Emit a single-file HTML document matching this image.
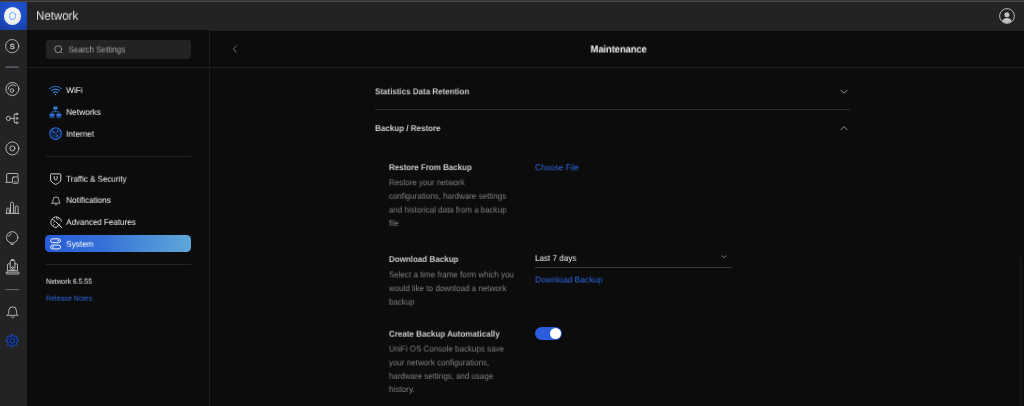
<!DOCTYPE html>
<html lang="en">
<head>
<meta charset="utf-8">
<title>Network</title>
<style>
*{box-sizing:border-box;margin:0;padding:0}
html,body{text-rendering:geometricPrecision;-webkit-font-smoothing:antialiased;width:1024px;height:406px;overflow:hidden;background:#0c0c0c;font-family:"Liberation Sans",sans-serif;color:#fff}
.abs{position:absolute}
#strip1{left:0;top:0;width:1024px;height:1px;background:#333334}
#strip2{left:0;top:1px;width:1024px;height:1px;background:#4b4b4d}
#hdr{left:0;top:2px;width:1024px;height:28.600px;background:#232325}
#logo{left:0;top:2px;width:27px;height:28px;background:radial-gradient(circle at 50% 30%,#2358d8 0%,#1c49bd 60%,#163c9f 100%)}
#logo i{position:absolute;left:3.900px;top:5.300px;width:17.100px;height:17.300px;border-radius:50%;background:radial-gradient(circle at 50% 40%,#ffffff 0%,#eeeeef 60%,#d4d4d8 100%)}
#logo b{position:absolute;left:8.800px;top:10.300px;width:7.300px;height:7.300px;border-radius:50%;border:0.900px solid #62a2f6}
#nav{left:0;top:30px;width:27px;height:376px;background:#232325}
#side{left:27px;top:30px;width:183px;height:376px;background:#0c0c0c;border-right:1px solid #1a1a1c}
#hline{left:27px;top:67px;width:997px;height:1px;background:#1f1f21}
#search{left:46px;top:40px;width:145px;height:19px;background:#232325;border-radius:3px}
.sdiv{position:absolute;left:46px;width:145px;height:1px;background:#242426}
#sys{left:45.400px;top:235.200px;width:146px;height:17.200px;border-radius:4.500px;background:linear-gradient(90deg,#295cd9 0%,#3471d8 40%,#4e93d8 75%,#5ea7d8 100%)}
.ico{position:absolute}
.tx{position:absolute;white-space:nowrap;line-height:1;transform-origin:0 50%;will-change:transform}
</style>
</head>
<body>
<div id="root" style="position:absolute;left:0;top:0;width:1024px;height:406px;overflow:hidden;will-change:transform">
<div class="abs" id="strip1"></div>
<div class="abs" id="strip2"></div>
<div class="abs" id="hdr"></div>
<div class="abs" id="logo"><i></i><b></b></div>
<svg class="abs" style="left:999px;top:7.900px" width="16" height="16" viewBox="0 0 16 16" fill="none"><circle cx="8" cy="8" r="7.400" stroke="#c6c6c8" stroke-width="0.900"/><circle cx="7.900" cy="6.700" r="2.500" fill="#c2c2c4"/><path d="M3.180 13.080A5 4.600 0 0 1 12.670 13.220A7 7 0 0 1 3.180 13.080z" fill="#c2c2c4"/></svg>

<div class="abs" id="nav"></div>
<div class="abs" id="side"></div>
<div class="abs" id="hline"></div>

<!-- left nav icons -->
<svg class="abs" style="left:0;top:30px" width="27" height="376" viewBox="0 0 27 376" fill="none" stroke="#c4c4c6" stroke-width="0.900" stroke-linecap="round" stroke-linejoin="round">
  <circle cx="12.200" cy="16.100" r="6.600" stroke-width="0.850"/>
  <text x="12.200" y="18.700" font-family="Liberation Sans, sans-serif" font-size="7.400" fill="#d0d0d2" stroke="#d0d0d2" stroke-width="0.300" text-anchor="middle">S</text>
  <path d="M5.900 37.100h12.600" stroke="#6c6c70" stroke-width="1.400"/>
  <!-- dashboard -->
  <circle cx="12.400" cy="59" r="6.500"/>
  <path d="M8.200 59.200a4.400 4.400 0 0 1 7.300-3.300"/>
  <circle cx="11.900" cy="60.600" r="1.800"/>
  <!-- topology -->
  <circle cx="8.400" cy="88.400" r="2.100"/>
  <path d="M10.600 88.400h3.600M15.600 84h-.5a.9.900 0 0 0-.9.900v7a.9.900 0 0 0 .9.900h.5"/>
  <circle cx="16.900" cy="84" r="0.900"/><circle cx="16.900" cy="88.400" r="0.900"/><circle cx="16.900" cy="92.800" r="0.900"/>
  <!-- devices -->
  <circle cx="12.400" cy="118.400" r="6.500"/><circle cx="12.400" cy="118.400" r="2.500"/>
  <!-- clients -->
  <path d="M6.700 151.800v-7.500a.8.800 0 0 1 .8-.8h9.700a.8.800 0 0 1 .8.800v2M5.700 152.300h6.200"/>
  <rect x="12.500" y="147" width="5.700" height="6.300" rx="1"/>
  <path d="M14.600 151.800h1.500" stroke-width="0.700"/>
  <!-- stats -->
  <path d="M6 183.400h13M6.700 183v-3.900a1 1 0 0 1 1-1h.6a1 1 0 0 1 1 1v3.900M10.500 183v-9.700a1 1 0 0 1 1-1h.9a1 1 0 0 1 1 1v9.700M15.200 183v-6a1 1 0 0 1 1-1h.9a1 1 0 0 1 1 1v6"/>
  <!-- insights -->
  <circle cx="12.200" cy="207.400" r="5.700"/>
  <path d="M8.800 206.300a3.700 3.700 0 0 1 2.300-2.400M10.900 214.300h2.700" />
  <!-- protect -->
  <rect x="6" y="242.100" width="13.200" height="1.900" rx="0.950"/>
  <path d="M10 233.800h-1.500a1 1 0 0 0-1 1v5.800h10v-5.800a1 1 0 0 0-1-1h-1.500"/>
  <rect x="10.200" y="230.500" width="4.700" height="9.300" rx="1.300"/>
  <path d="M11.300 230.500v-1h2.500v1" stroke-width="0.800"/>
  <circle cx="12.500" cy="237.600" r="0.900"/>
  <path d="M5.700 259.600h13.200" stroke="#68686c" stroke-width="1"/>
  <!-- bell -->
  <path d="M7.300 285.300h10.600c-1.100-1-1.500-2.200-1.500-4.700a3.800 3.800 0 0 0-7.600 0c0 2.500-.4 3.700-1.500 4.700z"/>
  <path d="M11.300 286.700a1.400 1.400 0 0 0 2.600 0"/>
  <!-- gear -->
  <g stroke="#1e4dbe" stroke-width="0.950" stroke-linejoin="round">
    <path d="M11.36 304.56 L13.04 304.56 L13.30 306.23 L14.66 306.79 L16.02 305.79 L17.21 306.98 L16.21 308.34 L16.77 309.70 L18.44 309.96 L18.44 311.64 L16.77 311.90 L16.21 313.26 L17.21 314.62 L16.02 315.81 L14.66 314.81 L13.30 315.37 L13.04 317.04 L11.36 317.04 L11.10 315.37 L9.74 314.81 L8.38 315.81 L7.19 314.62 L8.19 313.26 L7.63 311.90 L5.96 311.64 L5.96 309.96 L7.63 309.70 L8.19 308.34 L7.19 306.98 L8.38 305.79 L9.74 306.79 L11.10 306.23z" fill="#0b1c4e"/>
    <circle cx="12.2" cy="310.8" r="2.300" fill="#0d1630" stroke="#2253c8" stroke-width="0.900"/>
  </g>
</svg>

<!-- search -->
<div class="abs" id="search">
  <svg style="position:absolute;left:8px;top:5px" width="10" height="10" viewBox="0 0 10 10" fill="none" stroke="#a2a2a4" stroke-width="0.850" stroke-linecap="round"><circle cx="4.200" cy="4.200" r="3.450"/><path d="M6.700 6.700l1.400 1.400"/></svg>
</div>

<!-- sidebar items -->
<svg class="ico" style="left:49px;top:85px" width="13" height="11" viewBox="0 0 13 11" fill="none" stroke-width="1.050" stroke-linecap="round"><path d="M0.700 3.600a8.300 8.300 0 0 1 11.600 0" stroke="#2f6fd6"/><path d="M2.600 5.700a5.600 5.600 0 0 1 7.800 0" stroke="#3a80e4"/><path d="M4.500 7.700a2.900 2.900 0 0 1 4 0" stroke="#4a92ee"/><circle cx="6.500" cy="9.600" r="0.750" fill="#4a92ee" stroke="none"/></svg>

<svg class="ico" style="left:49px;top:105.500px" width="13" height="13" viewBox="0 0 13 13" fill="#3a80e4" stroke="#3a80e4" stroke-width="0.700"><rect x="4.300" y="0.600" width="4.200" height="2.900" stroke="none"/><path d="M6.400 3.500v2.200M3 7.600v-1.900h6.800v1.900" fill="none"/><rect x="0.600" y="7.600" width="4.800" height="3" stroke="none" fill="#2f72dc"/><rect x="7.400" y="7.600" width="4.800" height="3" stroke="none" fill="#2f72dc"/><path d="M0.600 11.700h4.800M7.400 11.700h4.800" fill="none" stroke="#2a62c8"/></svg>

<svg class="ico" style="left:49px;top:127.300px" width="13.200" height="13.200" viewBox="0 0 13.200 13.200" fill="none"><circle cx="6.600" cy="6.600" r="5.800" fill="#0d1a38" stroke="#2f6fd8" stroke-width="1.100"/><circle cx="6.600" cy="6.600" r="4.600" stroke="#1d4596" stroke-width="0.600" stroke-dasharray="1.400 1.100"/><circle cx="4.200" cy="4.800" r="0.850" fill="#3f86ee"/><circle cx="8.500" cy="4.300" r="0.800" fill="#3f86ee"/><circle cx="8.300" cy="8.900" r="0.850" fill="#3f86ee"/><path d="M5.600 5.800l2 1.200M4.600 8.700l1.300.6" stroke="#3a78d8" stroke-width="0.700" stroke-linecap="round"/></svg>

<div class="sdiv" style="top:156px"></div>

<svg class="ico" style="left:50px;top:173px" width="12" height="12" viewBox="0 0 12 12" fill="none" stroke="#dedede" stroke-width="0.950" stroke-linejoin="round"><path d="M1.300 0.900h8.800a0.700 0.700 0 0 1 .7.700v5.200c0 1.800-2.300 3.300-5.100 4.700-2.800-1.400-5.100-2.900-5.100-4.700v-5.200a0.700 0.700 0 0 1 .7-.7z"/><path d="M4.300 3.500v2a1.400 1.400 0 0 0 2.800 0v-2" stroke-width="0.900" stroke-linecap="round"/></svg>

<svg class="ico" style="left:50.600px;top:195.200px" width="10" height="10.500" viewBox="0 0 10 10.500" fill="none" stroke="#d2d2d2" stroke-width="0.800" stroke-linecap="round" stroke-linejoin="round"><path d="M0.800 8.200h8.400c-.9-.8-1.200-1.600-1.200-3.300a3 3 0 0 0-6 0c0 1.700-.3 2.500-1.200 3.300z"/><path d="M4.100 9.600a1 1 0 0 0 1.800 0"/></svg>

<svg class="ico" style="left:49.500px;top:215.800px" width="13" height="13" viewBox="0 0 13 13" fill="none" stroke="#dedede" stroke-width="0.900" stroke-linecap="round"><path d="M11.400 5.200a5.300 5.300 0 1 0-5.300 6.300"/><path d="M2.600 3.600l1.700.3.500 1.500-1.400 1.200M6.600 1.200l-.3 1.500 1.500.8 1.300-.9M3.400 9.200l1.300-.9" stroke-width="0.700"/><path d="M5.800 5.600l6 6.100M9.600 7.900l-3.300 3.500" stroke-width="1"/></svg>

<div class="abs" id="sys"></div>
<svg class="ico" style="left:50px;top:238px" width="11.200" height="12" viewBox="0 0 11.200 12" fill="none" stroke="#fff" stroke-width="0.950"><rect x="0.700" y="0.850" width="9.800" height="3.800" rx="1.900"/><rect x="0.700" y="7.100" width="9.800" height="3.800" rx="1.900"/><circle cx="8.300" cy="2.750" r="0.800" fill="#fff" stroke="none"/><circle cx="2.900" cy="9" r="0.800" fill="#fff" stroke="none"/></svg>

<div class="sdiv" style="top:264.200px;height:1.200px"></div>

<!-- main -->
<svg class="abs" style="left:231.900px;top:45.300px" width="6" height="8" viewBox="0 0 6 8" fill="none" stroke="#8c8c90" stroke-width="0.800" stroke-linecap="round" stroke-linejoin="round"><path d="M4.300 0.800l-3 3.200 3 3.200"/></svg>

<svg class="abs" style="left:840.400px;top:88.600px" width="8" height="6" viewBox="0 0 8 6" fill="none" stroke="#a0a0a4" stroke-width="0.900" stroke-linecap="round" stroke-linejoin="round"><path d="M1 1.300l3 3 3-3"/></svg>
<div class="abs" style="left:375px;top:109px;width:475px;height:1.400px;background:#2e2e30"></div>
<svg class="abs" style="left:840.400px;top:125.300px" width="8" height="6" viewBox="0 0 8 6" fill="none" stroke="#a0a0a4" stroke-width="0.900" stroke-linecap="round" stroke-linejoin="round"><path d="M1 4.600l3-3 3 3"/></svg>


<svg class="abs" style="left:720px;top:253.800px" width="8" height="6" viewBox="0 0 8 6" fill="none" stroke="#98989c" stroke-width="0.800" stroke-linecap="round" stroke-linejoin="round"><path d="M1.900 1.700l2.100 2.100 2.100-2.100"/></svg>
<div class="abs" style="left:535px;top:267px;width:197px;height:1px;background:#3a3a3d"></div>

<div class="abs" style="left:535px;top:326.900px;width:27px;height:13.600px;border-radius:7px;background:#2a5cdb"></div>
<div class="abs" style="left:549.500px;top:327.900px;width:11.400px;height:11.400px;border-radius:50%;background:#fff"></div>
<div class="abs" style="left:1019.200px;top:254.600px;width:3.200px;height:152px;border-radius:1.600px 1.600px 0 0;background:#131313"></div>
<div class="tx" id="t_title" style="left:36px;top:9px;font-size:12.40px;color:#e4e4e4;transform:translate(0.00px,0.69px) scaleX(0.9285)">Network</div>
<div class="tx" id="t_search" style="left:68px;top:45px;font-size:9.00px;color:#a4a4a6;transform:translate(0.50px,0.50px) scaleX(0.8942)">Search Settings</div>
<div class="tx" id="t_wifi" style="left:66px;top:86px;font-size:8.45px;color:#f2f2f2;transform:translate(0.20px,0.05px) scaleX(0.9672)">WiFi</div>
<div class="tx" id="t_networks" style="left:66px;top:107px;font-size:8.45px;color:#f2f2f2;transform:translate(0.20px,0.86px) scaleX(0.9825)">Networks</div>
<div class="tx" id="t_internet" style="left:66px;top:129px;font-size:8.45px;color:#f2f2f2;transform:translate(0.20px,0.74px) scaleX(0.9726)">Internet</div>
<div class="tx" id="t_traffic" style="left:66px;top:174px;font-size:8.45px;color:#f2f2f2;transform:translate(0.20px,0.72px) scaleX(0.9441)">Traffic &amp; Security</div>
<div class="tx" id="t_notif" style="left:66px;top:195px;font-size:8.45px;color:#f2f2f2;transform:translate(0.20px,0.84px) scaleX(0.9730)">Notifications</div>
<div class="tx" id="t_adv" style="left:66px;top:217px;font-size:8.45px;color:#f2f2f2;transform:translate(0.20px,0.86px) scaleX(0.9487)">Advanced Features</div>
<div class="tx" id="t_system" style="left:66px;top:239px;font-size:8.45px;color:#fff;transform:translate(0.20px,0.77px) scaleX(0.9670)">System</div>
<div class="tx" id="t_ver" style="left:46px;top:277px;font-size:7.50px;color:#ededed;transform:translate(0.00px,0.77px) scaleX(0.9122)">Network 6.5.55</div>
<div class="tx" id="t_rel" style="left:46px;top:294px;font-size:7.70px;color:#2d69dc;transform:translate(0.00px,0.73px) scaleX(0.9160)">Release Notes</div>
<div class="tx" id="t_maint" style="left:590px;top:45px;font-size:10.10px;color:#f2f2f2;font-weight:bold;transform:translate(0.60px,0.48px) scaleX(0.9174)">Maintenance</div>
<div class="tx" id="t_stats" style="left:375px;top:87px;font-size:8.55px;color:#cacaca;font-weight:bold;transform:translate(0.00px,0.28px) scaleX(0.9358)">Statistics Data Retention</div>
<div class="tx" id="t_backup" style="left:375px;top:124px;font-size:8.55px;color:#cacaca;font-weight:bold;transform:translate(0.00px,0.04px) scaleX(0.9390)">Backup / Restore</div>
<div class="tx" id="t_restore" style="left:388px;top:163px;font-size:8.55px;color:#cacaca;font-weight:bold;transform:translate(0.90px,0.08px) scaleX(0.9346)">Restore From Backup</div>
<div class="tx" id="t_d1" style="left:388px;top:178px;font-size:8.55px;color:#808084;transform:translate(0.90px,0.20px) scaleX(0.9324)">Restore your network</div>
<div class="tx" id="t_d2" style="left:388px;top:191px;font-size:8.55px;color:#808084;transform:translate(0.90px,0.80px) scaleX(0.9347)">configurations, hardware settings</div>
<div class="tx" id="t_d3" style="left:388px;top:205px;font-size:8.55px;color:#808084;transform:translate(0.90px,0.58px) scaleX(0.9340)">and historical data from a backup</div>
<div class="tx" id="t_d4" style="left:388px;top:218px;font-size:8.55px;color:#808084;transform:translate(0.90px,0.92px) scaleX(0.8887)">file</div>
<div class="tx" id="t_choose" style="left:535px;top:163px;font-size:8.60px;color:#2e68e0;transform:translate(0.00px,0.25px) scaleX(0.9597)">Choose File</div>
<div class="tx" id="t_dl" style="left:388px;top:254px;font-size:8.55px;color:#cacaca;font-weight:bold;transform:translate(0.90px,0.92px) scaleX(0.9378)">Download Backup</div>
<div class="tx" id="t_e1" style="left:388px;top:270px;font-size:8.55px;color:#808084;transform:translate(0.90px,0.37px) scaleX(0.9365)">Select a time frame form which you</div>
<div class="tx" id="t_e2" style="left:388px;top:284px;font-size:8.55px;color:#808084;transform:translate(0.90px,0.10px) scaleX(0.9367)">would like to download a network</div>
<div class="tx" id="t_e3" style="left:388px;top:297px;font-size:8.55px;color:#808084;transform:translate(0.90px,0.67px) scaleX(0.9346)">backup</div>
<div class="tx" id="t_last" style="left:535px;top:253px;font-size:8.55px;color:#f0f0f0;transform:translate(0.00px,0.87px) scaleX(0.9436)">Last 7 days</div>
<div class="tx" id="t_dllnk" style="left:535px;top:275px;font-size:8.60px;color:#2e68e0;transform:translate(0.00px,0.44px) scaleX(0.9779)">Download Backup</div>
<div class="tx" id="t_create" style="left:388px;top:329px;font-size:8.55px;color:#cacaca;font-weight:bold;transform:translate(0.90px,0.64px) scaleX(0.9387)">Create Backup Automatically</div>
<div class="tx" id="t_f1" style="left:388px;top:344px;font-size:8.55px;color:#808084;transform:translate(0.90px,0.54px) scaleX(0.9359)">UniFi OS Console backups save</div>
<div class="tx" id="t_f2" style="left:388px;top:358px;font-size:8.55px;color:#808084;transform:translate(0.90px,0.33px) scaleX(0.9390)">your network configurations,</div>
<div class="tx" id="t_f3" style="left:388px;top:371px;font-size:8.55px;color:#808084;transform:translate(0.90px,0.80px) scaleX(0.9294)">hardware settings, and usage</div>
<div class="tx" id="t_f4" style="left:388px;top:385px;font-size:8.55px;color:#808084;transform:translate(0.90px,0.04px) scaleX(0.9591)">history.</div>
</div>
</body>
</html>
